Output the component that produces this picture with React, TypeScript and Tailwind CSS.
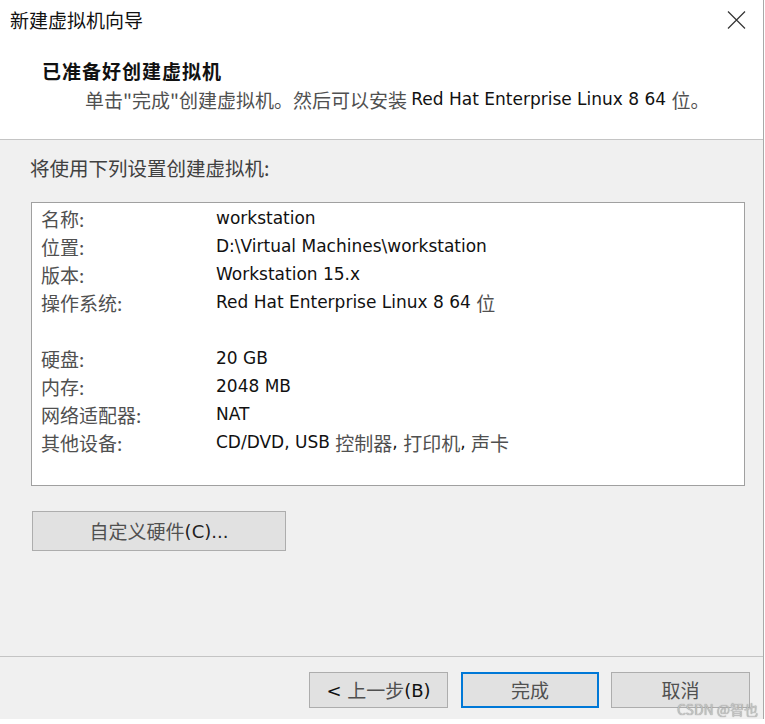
import React from "react";

const CJK = '"Noto Sans CJK SC", sans-serif';
const LAT = '"DejaVu Sans", "Noto Sans CJK SC", sans-serif';

function C({ children, className = "" }: { children: React.ReactNode; className?: string }) {
  return (
    <span className={`text-[#505050] text-[19px] ${className}`} style={{ fontFamily: CJK }}>
      {children}
    </span>
  );
}
function L({ children, className = "" }: { children: React.ReactNode; className?: string }) {
  return (
    <span className={`text-[#111] text-[17px] ${className}`} style={{ fontFamily: LAT }}>
      {children}
    </span>
  );
}

const rows: { label: string; value: React.ReactNode }[] = [
  { label: "名称:", value: <L>workstation</L> },
  { label: "位置:", value: <L>D:\Virtual Machines\workstation</L> },
  { label: "版本:", value: <L>Workstation 15.x</L> },
  {
    label: "操作系统:",
    value: (
      <>
        <L>Red Hat Enterprise Linux 8 64 </L>
        <C>位</C>
      </>
    ),
  },
  { label: "", value: null },
  { label: "硬盘:", value: <L>20 GB</L> },
  { label: "内存:", value: <L>2048 MB</L> },
  { label: "网络适配器:", value: <L>NAT</L> },
  {
    label: "其他设备:",
    value: (
      <>
        <L>CD/DVD, USB </L>
        <C>控制器</C>
        <L>, </L>
        <C>打印机</C>
        <L>, </L>
        <C>声卡</C>
      </>
    ),
  },
];

export default function App() {
  return (
    <div className="relative w-[765px] h-[724px] bg-white overflow-hidden">
      <div className="w-[764px] h-[719px] border-r border-[#a9a9a9] flex flex-col">
        {/* Header */}
        <div className="h-[140px] bg-white border-b border-[#c4c4c4] flex flex-col">
          <div className="h-[40px] flex items-center justify-between pl-[10px] pr-[17px]">
            <span className="text-[19px] text-[#111]" style={{ fontFamily: CJK }}>
              新建虚拟机向导
            </span>
            <svg width="19" height="18" viewBox="0 0 19 18">
              <path d="M1 0.5 L18 17.5 M18 0.5 L1 17.5" stroke="#333" strokeWidth="1.2" fill="none" />
            </svg>
          </div>
          <div className="mt-[19px] pl-[42px] h-[24px] flex items-center">
            <span
              className="text-[19px] font-bold text-[#111] tracking-[1px]"
              style={{ fontFamily: CJK }}
            >
              已准备好创建虚拟机
            </span>
          </div>
          <div className="mt-[5px] pl-[85px] h-[24px] flex items-center whitespace-pre">
            <C>单击"完成"创建虚拟机。然后可以安装 </C>
            <L className="text-[15px]">Red Hat Enterprise Linux 8 64 </L>
            <C>位。</C>
          </div>
        </div>

        {/* Body */}
        <div className="flex-1 bg-[#f0f0f0] flex flex-col">
          <div className="mt-[16px] pl-[30px] h-[24px] flex items-center">
            <span className="text-[19.5px] text-[#404040]" style={{ fontFamily: CJK }}>
              将使用下列设置创建虚拟机:
            </span>
          </div>
          <div className="mt-[22px] ml-[31px] w-[714px] h-[284px] bg-white border border-[#a0a0a0] pt-[2px] pl-[9px]">
            {rows.map((r, i) => (
              <div key={i} className="h-[28px] flex items-center whitespace-pre">
                <div className="w-[175px] shrink-0">
                  <C>{r.label}</C>
                </div>
                <div className="flex items-center">{r.value}</div>
              </div>
            ))}
          </div>
          <div className="mt-[25px] ml-[32px] w-[254px] h-[40px] bg-[#e1e1e1] border border-[#adadad] flex items-center justify-center">
            <C>自定义硬件</C>
            <L className="text-[18px] text-[#222]">(C)...</L>
          </div>
        </div>

        {/* Footer */}
        <div className="h-[63px] bg-[#f0f0f0] border-t border-[#c4c4c4] flex justify-end items-start pt-[15px] pr-[13px] gap-[13px]">
          <div className="w-[139px] h-[36px] bg-[#e1e1e1] border border-[#adadad] flex items-center justify-center whitespace-pre">
            <L className="text-[18px] text-[#111]">&lt; </L>
            <C>上一步</C>
            <L className="text-[18px] text-[#111]">(B)</L>
          </div>
          <div className="w-[138px] h-[36px] bg-[#e1e1e1] border-2 border-[#0078d7] flex items-center justify-center">
            <C>完成</C>
          </div>
          <div className="w-[139px] h-[36px] bg-[#e1e1e1] border border-[#adadad] flex items-center justify-center -ml-[1px]">
            <C>取消</C>
          </div>
        </div>
      </div>

      {/* Watermark */}
      <div
        className="absolute left-[677px] top-[700px] text-[14px] leading-[18px] text-[#c4c4c4] whitespace-nowrap"
        style={{ fontFamily: CJK, textShadow: "0 0 1px #808080" }}
      >
        CSDN @智也
      </div>
    </div>
  );
}
